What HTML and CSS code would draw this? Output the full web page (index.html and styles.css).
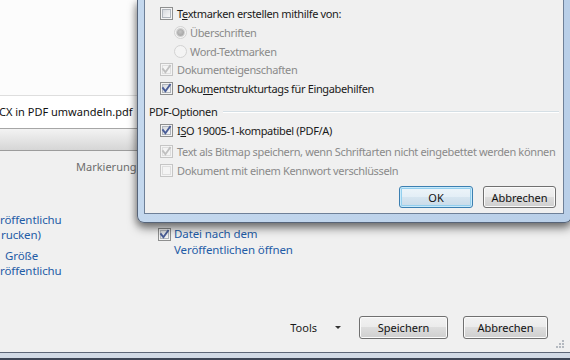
FILE: index.html
```html
<!DOCTYPE html>
<html lang="de">
<head>
<meta charset="utf-8">
<title>PDF-Optionen</title>
<link rel="stylesheet" href="styles.css">
</head>
<body>
<div class="screen">
  <div class="save">
    <div class="pane"></div>
    <div class="fname">CX in PDF umwandeln.pdf</div>
    <div class="band"></div>
    <div class="sbody">
      <div class="meta">Markierung</div>
      <div class="opts">
        <div class="links">
          <div class="lgrp"><div>röffentlichu</div><div class="in1">rucken)</div></div>
          <div class="lgrp g2"><div class="in5">Größe</div><div>röffentlichu</div></div>
        </div>
        <div class="openopt">
          <span class="cb on"><svg viewBox="0 0 11 11"><path d="M2 5.2 L4.4 8.2 L9 1.8" /></svg></span>
          <div class="otext">Datei nach dem<br>Veröffentlichen öffnen</div>
        </div>
      </div>
      <div class="footer">
        <span class="tools">Tools</span><span class="caret"></span>
        <button class="btn bsave">Speichern</button>
        <button class="btn bcancel">Abbrechen</button>
      </div>
      <svg class="grip" viewBox="0 0 11 11"><g fill="#b4b9c0"><rect x="8" y="0" width="2" height="2"/><rect x="5" y="3" width="2" height="2"/><rect x="8" y="3" width="2" height="2"/><rect x="2" y="6" width="2" height="2"/><rect x="5" y="6" width="2" height="2"/><rect x="8" y="6" width="2" height="2"/></g></svg>
    </div>
    <div class="edge"></div>
  </div>

  <div class="dlg">
    <div class="client">
      <div class="row"><span class="cb"></span><span>T<u>e</u>xtmarken erstellen mithilfe von:</span></div>
      <div class="row sub"><span class="rb dis sel"></span><span class="dim">Überschriften</span></div>
      <div class="row sub r18"><span class="rb dis"></span><span class="dim">Word-Textmarken</span></div>
      <div class="row"><span class="cb dis on"><svg viewBox="0 0 11 11"><path d="M2 5.2 L4.4 8.2 L9 1.8" /></svg></span><span class="dim">Dokumenteigenschaften</span></div>
      <div class="row"><span class="cb on"><svg viewBox="0 0 11 11"><path d="M2 5.2 L4.4 8.2 L9 1.8" /></svg></span><span>Doku<u>m</u>entstrukturtags für Eingabehilfen</span></div>
      <div class="glabel"><span>PDF-Optionen</span><span class="gline"></span></div>
      <div class="row"><span class="cb on"><svg viewBox="0 0 11 11"><path d="M2 5.2 L4.4 8.2 L9 1.8" /></svg></span><span>I<u>S</u>O 19005-1-kompatibel (PDF/A)</span></div>
      <div class="row mt2"><span class="cb dis on"><svg viewBox="0 0 11 11"><path d="M2 5.2 L4.4 8.2 L9 1.8" /></svg></span><span class="dim">Text als Bitmap speichern, wenn Schriftarten nicht eingebettet werden können</span></div>
      <div class="row"><span class="cb dis"></span><span class="dim">Dokument mit einem Kennwort verschlüsseln</span></div>
      <div class="btns">
        <button class="btn def bok">OK</button>
        <button class="btn bdc">Abbrechen</button>
      </div>
    </div>
  </div>
</div>
</body>
</html>
```

FILE: styles.css
```css
* { box-sizing: border-box; }
html, body { margin: 0; padding: 0; }
body {
  width: 570px;
  height: 360px;
  overflow: hidden;
  background: #f0f0f0;
  font-family: "Noto Sans", "Liberation Sans", sans-serif;
  font-size: 11px;
  letter-spacing: -0.35px;
  color: #1a1a1a;
}
.screen { position: relative; width: 570px; height: 360px; overflow: hidden; }

/* background save dialog */
.save { display: flex; flex-direction: column; height: 360px; }
.pane { height: 96px; background: #fcfcfc; border-bottom: 1px solid #dedede; flex: none; }
.fname {
  height: 33px; flex: none; background: #fff; border-bottom: 1px solid #a6a6a6;
  line-height: 32px; color: #111; white-space: nowrap;
  letter-spacing: 0; text-indent: -1px;
}
.band {
  height: 22px; flex: none;
  background: linear-gradient(#f3f3f3, #e6e6e6 45%, #d6d6d6);
  border-bottom: 1px solid #9c9c9c;
}
.sbody { position: relative; height: 201px; flex: none; display: flex; flex-direction: column; }
.meta { padding: 8px 0 0 76px; line-height: 16px; color: #6d6d6d; letter-spacing: 0; }
.opts { display: flex; margin-top: 37px; color: #1f5ca6; font-size: 11.5px; letter-spacing: -0.1px; }
.links { width: 158px; flex: none; line-height: 15px; white-space: nowrap; }
.lgrp.g2 { margin-top: 6px; }
.in1 { padding-left: 1px; }
.in5 { padding-left: 5px; }
.openopt { display: flex; align-items: flex-start; gap: 3px; padding-top: 14px; }
.openopt .cb { margin-top: 2px; }
.otext { line-height: 16px; }
.footer {
  margin-top: auto; display: flex; align-items: center; justify-content: flex-end;
  padding: 0 22px 13px 0; letter-spacing: 0;
}
.tools { color: #1a1a1a; }
.caret {
  width: 0; height: 0; margin: 0 18px 0 18px;
  border-left: 3px solid transparent; border-right: 3px solid transparent; border-top: 3px solid #333;
}
.bsave { width: 89px; height: 23px; margin-right: 15px; }
.bcancel { width: 85px; height: 23px; }
.grip { position: absolute; right: 5px; bottom: 1px; width: 11px; height: 11px; }
.edge {
  height: 8px; flex: none;
  background: linear-gradient(#5d6677 0 1px, #d2dae5 1px 6px, #3e4656 6px);
}

/* buttons */
.btn {
  font: inherit; color: #111; padding: 0;
  border: 1px solid #707070; border-radius: 3px;
  background: linear-gradient(#f2f2f2 0%, #ebebeb 50%, #dddddd 50%, #cfcfcf 100%);
  box-shadow: inset 0 0 0 1px #fbfbfb;
}
.btn.def {
  border-color: #3c7fb1;
  box-shadow: inset 0 0 0 1px #c9eafa, inset 0 0 0 2px #93cfee;
  background: linear-gradient(#eef5fa 0%, #e3eef6 50%, #d6e5f0 50%, #c8dae8 100%);
}

/* options dialog */
.dlg {
  position: absolute; left: 137px; top: 0; width: 435px; height: 223px;
  border: 1px solid #566479; border-top: none; border-radius: 0 0 7px 7px;
  background: linear-gradient(90deg, #c4d8ee, #b9cfe8);
  padding: 0 7px 8px 6px;
  box-shadow: 0 5px 10px rgba(0,0,0,.5), -2px 2px 6px rgba(0,0,0,.15);
}
.client {
  height: 100%; background: #f0f0f0;
  border: 1px solid #6e8098; border-top: none;
  padding-top: 4px;
  display: flex; flex-direction: column;
}
.row { display: flex; align-items: center; height: 19px; padding-left: 15px; gap: 4px; white-space: nowrap; }
.row.sub { padding-left: 29px; gap: 3px; }
.row.r18 { height: 18px; }
.row.mt2 { margin-top: 2px; }
.dim { color: #8a8a8a; }
.glabel { display: flex; align-items: center; height: 19px; margin-top: 4px; padding: 0 4px 0 4px; }
.gline { flex: 1; margin-left: 6px; height: 2px; border-top: 1px solid #d5dfe5; border-bottom: 1px solid #fff; }
.btns { display: flex; justify-content: flex-end; gap: 10px; margin-top: 6px; padding-right: 7px; }
.bok { width: 74px; height: 22px; }
.bdc { width: 73px; height: 22px; }

/* checkbox */
.cb {
  position: relative; flex: none; width: 13px; height: 13px;
  border: 1px solid #8e8f8f;
  background: linear-gradient(135deg, #cdd1d7, #f7f7f7 80%);
  box-shadow: inset 0 0 0 1px #f4f4f4, inset 0 0 0 2px #b0b5bc;
}
.cb svg { position: absolute; left: 0; top: 0; width: 11px; height: 11px; }
.cb path { fill: none; stroke: #4a5e98; stroke-width: 1.9; stroke-linecap: square; }
.cb.dis { border-color: #c5c5c5; background: #f4f4f4; box-shadow: inset 0 0 0 1px #f4f4f4, inset 0 0 0 2px #dedede; }
.cb.dis path { stroke: #c0c0c0; }

/* radio */
.rb {
  position: relative; flex: none; width: 13px; height: 13px; border-radius: 50%;
  border: 1px solid #b5b5b5;
  background: radial-gradient(circle at 50% 50%, #f4f4f4 0 4px, #e4e4e4 5px);
}
.rb.dis { border-color: #d3d3d3; background: #f4f4f4; }
.rb.sel::after {
  content: ""; position: absolute; left: 2px; top: 2px; width: 7px; height: 7px; border-radius: 50%;
  background: radial-gradient(circle at 45% 40%, #c4c4c4, #9a9a9a);
  box-shadow: 0 0 0 1px #d0d0d0;
}
```
